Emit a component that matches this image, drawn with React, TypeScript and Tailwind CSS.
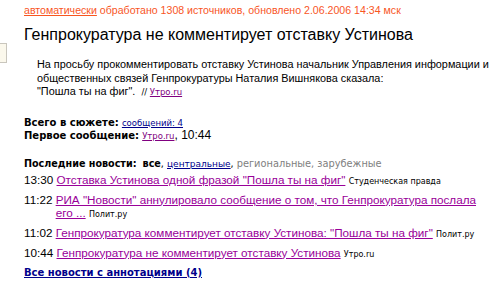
import React from "react";

const sans = { fontFamily: '"Liberation Sans", Arial, sans-serif' };
const verdana = { fontFamily: '"DejaVu Sans", Verdana, sans-serif' };

function Src({ children }: { children: React.ReactNode }) {
  return (
    <span className="text-[8px] leading-none" style={verdana}>
      {children}
    </span>
  );
}

export default function App() {
  return (
    <div className="w-[500px] h-[288px] bg-white overflow-hidden flex text-black" style={sans}>
      <div className="w-[24px] shrink-0 pt-[43px]">
        <div className="w-[7px] h-[20px] bg-[#fbf8ec] border border-l-0 border-[#c9c6bd]" />
      </div>
      <div className="flex-1 min-w-0">
        <div className="pt-[4px] text-[10.6px] leading-[13px] text-[#f8561f] whitespace-nowrap">
          <a className="underline">автоматически</a> обработано 1308 источников, обновлено 2.06.2006 14:34 мск
        </div>
        <h1 className="mt-[9px] text-[16px] leading-[18px] whitespace-nowrap">
          Генпрокуратура не комментирует отставку Устинова
        </h1>
        <p className="mt-[14px] ml-[13px] text-[10.85px] leading-[13.5px] whitespace-nowrap">
          На просьбу прокомментировать отставку Устинова начальник Управления информации и
          <br />
          общественных связей Генпрокуратуры Наталия Вишнякова сказала:
          <br />
          "Пошла ты на фиг".&nbsp;{" "}
          <span className="text-[8.5px] leading-none" style={verdana}>
            // <a className="underline text-[#800080]">Утро.ru</a>
          </span>
        </p>
        <div className="mt-[17px] text-[10px] leading-[13px]" style={verdana}>
          <div>
            <b>Всего в сюжете:</b>{" "}
            <a className="underline text-[#00008b] text-[8.5px] leading-none">сообщений: 4</a>
          </div>
          <div>
            <b>Первое сообщение:</b>{" "}
            <a className="underline text-[#800080] text-[8.5px] leading-none">Утро.ru</a>
            <span className="text-[12px] leading-none" style={sans}>, 10:44</span>
          </div>
        </div>
        <div className="mt-[15px] text-[9.6px] leading-[13px] whitespace-nowrap" style={verdana}>
          <b>Последние новости:</b>&nbsp; <b>все</b>,{" "}
          <a className="underline text-[#00008b] text-[9px] leading-none">центральные</a>,{" "}
          <span className="text-[#808080] text-[9.8px] leading-none">региональные, зарубежные</span>
        </div>
        <div className="mt-[3px] text-[11.7px] leading-[13px] flex flex-col gap-[7px] whitespace-nowrap">
          <div>
            13:30 <a className="underline text-[#990099]">Отставка Устинова одной фразой "Пошла ты на фиг"</a>{" "}
            <Src>Студенческая правда</Src>
          </div>
          <div className="flex">
            <span className="whitespace-pre">11:22 </span>
            <div>
              <a className="underline text-[#990099]">
                РИА "Новости" аннулировало сообщение о том, что Генпрокуратура послала
                <br />
                его ...
              </a>{" "}
              <Src>Полит.ру</Src>
            </div>
          </div>
          <div>
            11:02 <a className="underline text-[#990099]">Генпрокуратура комментирует отставку Устинова: "Пошла ты на фиг"</a>{" "}
            <Src>Полит.ру</Src>
          </div>
          <div>
            10:44 <a className="underline text-[#990099]">Генпрокуратура не комментирует отставку Устинова</a>{" "}
            <Src>Утро.ru</Src>
          </div>
        </div>
        <div className="mt-[7px] text-[10px] leading-[13px]" style={verdana}>
          <a className="underline font-bold text-[#00008b]">Все новости с аннотациями (4)</a>
        </div>
      </div>
    </div>
  );
}
